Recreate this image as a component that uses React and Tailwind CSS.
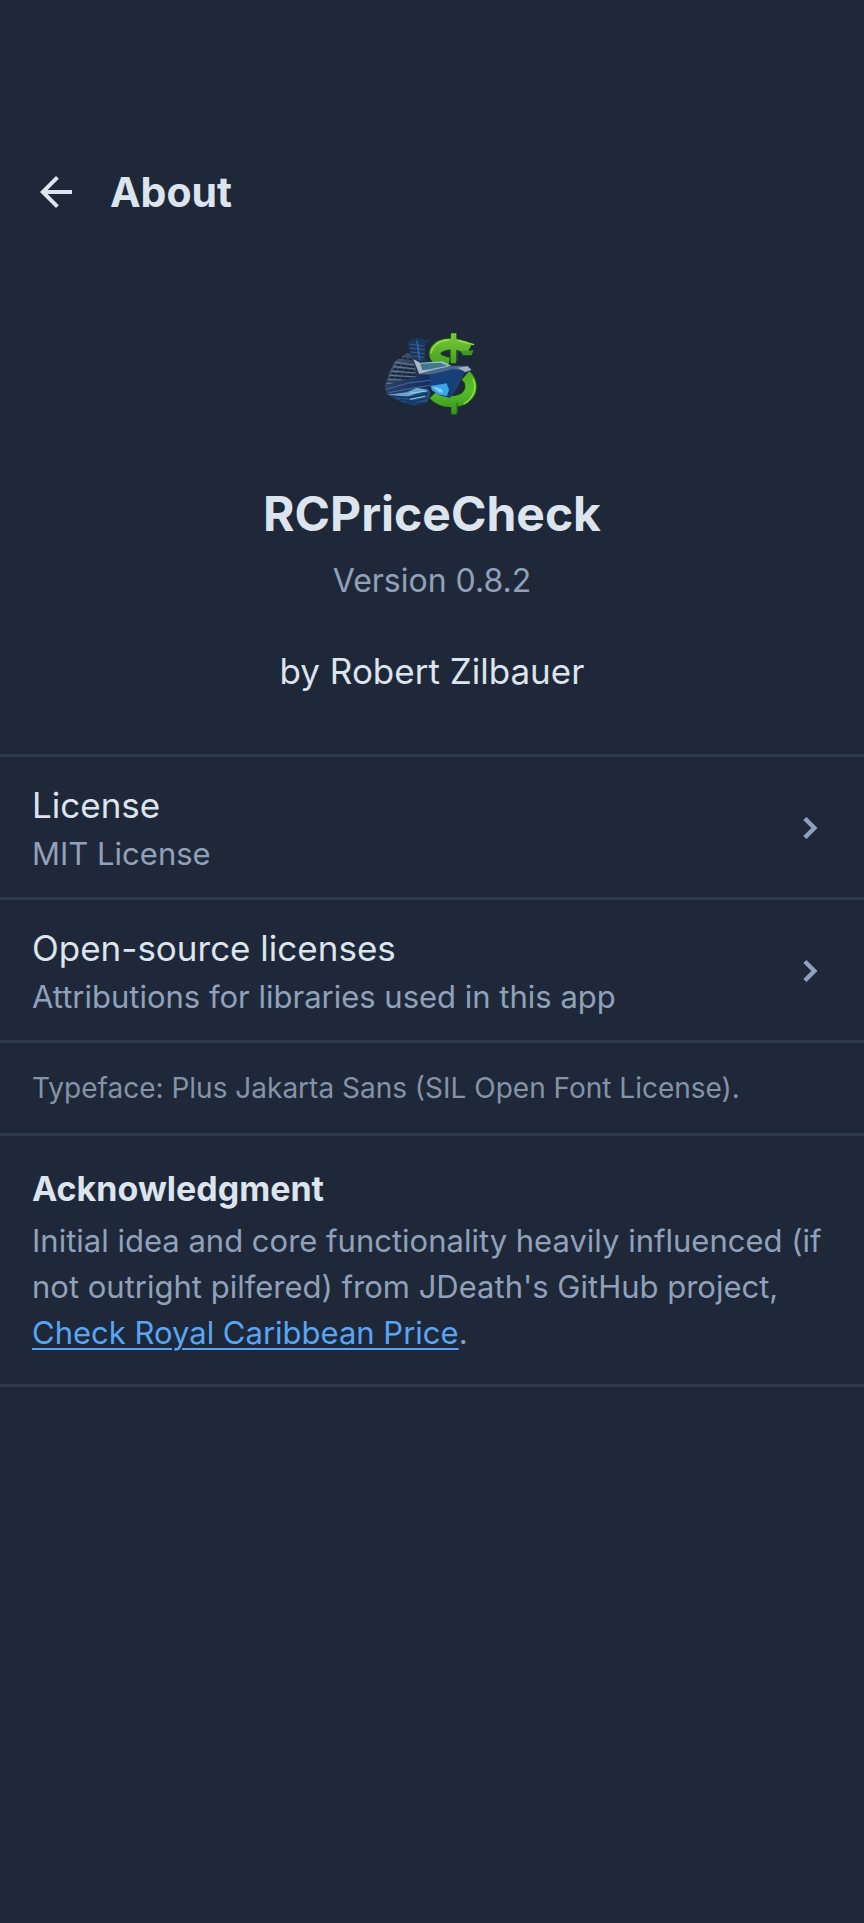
import React from 'react';

function AppLogo() {
  return (
    <svg viewBox="0 0 372 312" className="h-26 w-31" role="img" aria-label="RCPriceCheck logo">
      <defs>
        <linearGradient id="dollar" gradientUnits="userSpaceOnUse" x1="0" y1="40" x2="0" y2="284">
          <stop offset="0" stopColor="#7cc93a" />
          <stop offset="0.35" stopColor="#4aa321" />
          <stop offset="0.7" stopColor="#58bd2a" />
          <stop offset="1" stopColor="#37921f" />
        </linearGradient>
        <linearGradient id="decks" x1="0" y1="0" x2="1" y2="1">
          <stop offset="0" stopColor="#52657f" />
          <stop offset="0.5" stopColor="#2b3b55" />
          <stop offset="1" stopColor="#142240" />
        </linearGradient>
        <linearGradient id="hull" x1="0" y1="0" x2="1" y2="0">
          <stop offset="0" stopColor="#2a4066" />
          <stop offset="0.5" stopColor="#142f63" />
          <stop offset="1" stopColor="#1d4a86" />
        </linearGradient>
      </defs>

      {/* Dollar sign */}
      <g fill="none" stroke="#173f24">
        <path d="M299 88 C276 76 252 70 232 73 C206 76 192 90 195 106 C198 118 214 124 236 130" strokeWidth="40" />
        <path d="M286 165 C306 183 308 210 292 227 C270 252 218 251 190 222" strokeWidth="40" />
        <path d="M250 38 V130 M252 232 V285" strokeWidth="22" />
      </g>
      <g fill="none" stroke="url(#dollar)">
        <path d="M298 87 C276 76 252 70 232 73 C206 76 192 90 195 106 C198 118 214 124 236 130" strokeWidth="33" />
        <path d="M287 166 C306 183 308 210 292 227 C270 252 218 251 191 223" strokeWidth="33" />
        <path d="M251 40 L250 130 M252 232 L252 283" strokeWidth="16" />
      </g>
      <path d="M184 99 C186 78 207 61 238 60 M264 62 L312 74 M309 177 C321 203 312 235 281 252" fill="none" stroke="#9ce04b" strokeWidth="4" />
      <path d="M261 92 V124 M241 92 V124 M262 250 V276" fill="none" stroke="#286b1e" strokeWidth="4" />
      <path d="M272 94 L311 91 L304 106 L279 106 Z" fill="#3f9a24" />

      {/* Ship */}
      <path d="M114 68 C124 52 145 49 163 60 L184 57 L182 62 L166 70 L167 123 L145 128 L122 106 Z" fill="#1b365c" />
      <path d="M118 72 L160 78 M118 84 L164 89 M122 96 L164 101 M128 108 L162 112" stroke="#456a92" strokeWidth="3" opacity="0.75" />
      <path d="M140 62 C146 80 144 104 150 121" fill="none" stroke="#3879b4" strokeWidth="4" opacity="0.8" />
      <path d="M44 198 L61 151 L75 124 L112 98 L124 103 L145 155 L172 168 L160 195 L51 226 Z" fill="url(#decks)" />
      <path d="M76 127 L134 135 M70 140 L137 147 M64 153 L137 159 M58 166 L139 171 M55 178 L130 182 M50 190 L120 191" stroke="#93a4b8" strokeWidth="3" opacity="0.6" />
      <path d="M79 134 L133 141 M71 147 L135 153 M65 160 L136 165 M61 172 L124 176 M84 112 L127 119" stroke="#101f38" strokeWidth="4" strokeDasharray="12 4" />
      <path d="M46 199 C86 179 139 169 190 164 L259 138 L296 143 L302 153 L282 160 L256 214 L240 234 L208 226 L176 204 L99 218 L52 225 Z" fill="url(#hull)" />
      <path d="M47 208 L116 189 L196 179 M57 218 L140 202 L199 194" fill="none" stroke="#5877a0" strokeWidth="3" opacity="0.75" />
      <path d="M130 117 L150 128 L218 124 L244 137 L184 155 L148 163 Z" fill="#a9b9c8" />
      <path d="M151 131 L211 128 L233 137 L180 148 L157 151 Z" fill="#3b7a8c" />
      <path d="M146 162 L188 150 L247 137 L293 138 L304 151 L279 156 L231 155 L178 164 Z" fill="#4c678c" />
      <path d="M178 165 L247 148 L288 151 L270 172 L246 214 L224 218 L181 197 Z" fill="#173f7a" />
      <path d="M262 143 L293 139 L304 149 L286 156 Z" fill="#a3adbf" />
      <path d="M182 198 L230 190 L237 209 L231 228 L207 224 L186 211 Z" fill="#38a6e9" />
      <path d="M186 199 L215 207 L220 218 L207 217 Z" fill="#8ecdf0" />

      {/* Bow wave */}
      <path d="M51 222 C88 226 104 212 132 207 L175 208 L182 218 L172 246 L132 256 L95 246 Z" fill="#24517f" />
      <path d="M53 224 L112 217 L140 203 L174 209 L143 219 L110 231 Z" fill="#6aa6cd" />
      <path d="M67 229 L120 232 L174 221 M88 239 L132 244 L172 234 M106 248 L143 251 L166 247" fill="none" stroke="#163865" strokeWidth="5" />
      <path d="M119 220 L172 213 M120 238 L165 229" fill="none" stroke="#9bd0e8" strokeWidth="3" />
    </svg>
  );
}

function BackIcon() {
  return (
    <svg viewBox="0 0 24 24" className="size-12" fill="currentColor" aria-hidden="true">
      <path d="M20 11H7.83l5.59-5.59L12 4l-8 8 8 8 1.41-1.41L7.83 13H20v-2z" />
    </svg>
  );
}

function ChevronIcon() {
  return (
    <svg viewBox="0 0 24 24" className="size-11 shrink-0 text-slate-400" fill="none" stroke="currentColor" strokeWidth="2.4" aria-hidden="true">
      <path d="M9.2 6.8L14.4 12l-5.2 5.2" />
    </svg>
  );
}

function LinkRow({ title, subtitle }) {
  return (
    <button type="button" className="flex w-full items-center justify-between border-b-3 border-[#2d3b4d] px-8 pt-[22px] pb-5 text-left">
      <span className="flex flex-col">
        <span className="text-[35px] leading-[52px]">{title}</span>
        <span className="text-[31px] leading-[46px] text-slate-400">{subtitle}</span>
      </span>
      <ChevronIcon />
    </button>
  );
}

export default function App() {
  return (
    <div className="min-h-screen bg-[#1f2839] font-['Inter',sans-serif] text-[#dce4ee]">
      <header className="flex items-center gap-[30px] px-8 pt-40">
        <button type="button" aria-label="Back" className="py-2">
          <BackIcon />
        </button>
        <h1 className="text-[41px] leading-16 font-bold">About</h1>
      </header>

      <main>
        {/* App identity */}
        <section className="flex flex-col items-center border-b-3 border-[#2d3b4d] pt-24 pb-[58px] text-center">
          <AppLogo />
          <h2 className="mt-[58px] text-[48px] leading-16 font-bold">RCPriceCheck</h2>
          <p className="mt-3 text-[32px] leading-[46px] text-slate-400">Version 0.8.2</p>
          <p className="mt-[42px] text-[35px] leading-[50px]">by Robert Zilbauer</p>
        </section>

        <LinkRow title="License" subtitle="MIT License" />
        <LinkRow title="Open-source licenses" subtitle="Attributions for libraries used in this app" />

        <p className="border-b-3 border-[#2d3b4d] px-8 py-6 text-[28px] leading-[42px] text-[#8593a7]">
          Typeface: Plus Jakarta Sans (SIL Open Font License).
        </p>

        <section className="border-b-3 border-[#2d3b4d] px-8 pt-7 pb-7">
          <h3 className="mb-1 text-[34px] leading-[50px] font-bold">Acknowledgment</h3>
          <p className="text-[31px] leading-[46px] text-slate-400">
            Initial idea and core functionality heavily influenced (if not outright pilfered) from JDeath's GitHub project,{' '}
            <a href="#check-royal-caribbean-price" className="text-[#58a6f3] underline decoration-2 underline-offset-4">
              Check Royal Caribbean Price
            </a>
            .
          </p>
        </section>
      </main>
    </div>
  );
}
